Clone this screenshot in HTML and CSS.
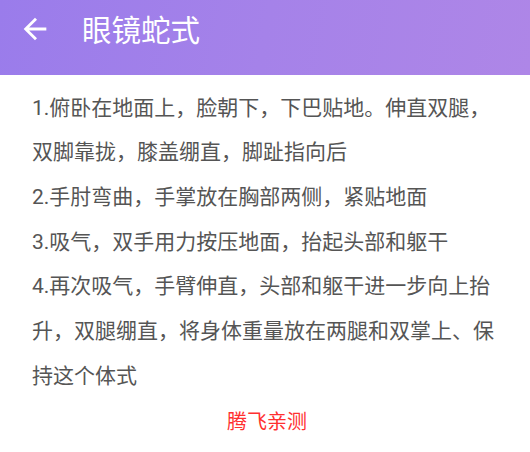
FILE: index.html
```html
<!DOCTYPE html>
<html lang="zh-CN">
<head>
<meta charset="utf-8">
<title>眼镜蛇式</title>
<link rel="stylesheet" href="styles.css">
</head>
<body>
<header class="appbar">
  <div class="appbar-row">
    <svg class="back" viewBox="0 0 24 24" aria-hidden="true"><path d="M20 11H7.83l5.59-5.59L12 4l-8 8 8 8 1.41-1.41L7.83 13H20v-2z"/></svg>
    <h1 class="title">眼镜蛇式</h1>
  </div>
</header>
<main class="content">
  <p class="step">1.俯卧在地面上，脸朝下，下巴贴地。伸直双腿，双脚靠拢，膝盖绷直，脚趾指向后</p>
  <p class="step">2.手肘弯曲，手掌放在胸部两侧，紧贴地面</p>
  <p class="step">3.吸气，双手用力按压地面，抬起头部和躯干</p>
  <p class="step">4.再次吸气，手臂伸直，头部和躯干进一步向上抬升，双腿绷直，将身体重量放在两腿和双掌上、保持这个体式</p>
  <p class="credit">腾飞亲测</p>
</main>
</body>
</html>
```

FILE: styles.css
```css
html, body {
  margin: 0;
  padding: 0;
  background: #ffffff;
}

body {
  width: 530px;
  height: 452px;
  overflow: hidden;
  font-family: Roboto, "Noto Sans CJK SC", sans-serif;
}

.appbar {
  height: 75px;
  background: linear-gradient(100deg, #9a7ceb 0%, #a582e9 50%, #ae86e7 100%);
}

.appbar-row {
  height: 58px;
  display: flex;
  align-items: center;
}

.back {
  width: 34px;
  height: 34px;
  margin-left: 18px;
  fill: #ffffff;
  flex: none;
}

.title {
  margin: 0 0 0 30px;
  font-family: "Noto Sans CJK SC", sans-serif;
  font-weight: 400;
  font-size: 29.5px;
  line-height: 1;
  color: #ffffff;
}

.content {
  padding: 10.6px 32px 0 32px;
}

.step {
  margin: 0;
  font-size: 21px;
  line-height: 44.7px;
  color: #555555;
}

.credit {
  margin: 0;
  text-align: center;
  font-family: "Noto Sans CJK SC", sans-serif;
  font-size: 20px;
  line-height: 44.7px;
  color: #ff3030;
  padding-left: 4px;
}
```
